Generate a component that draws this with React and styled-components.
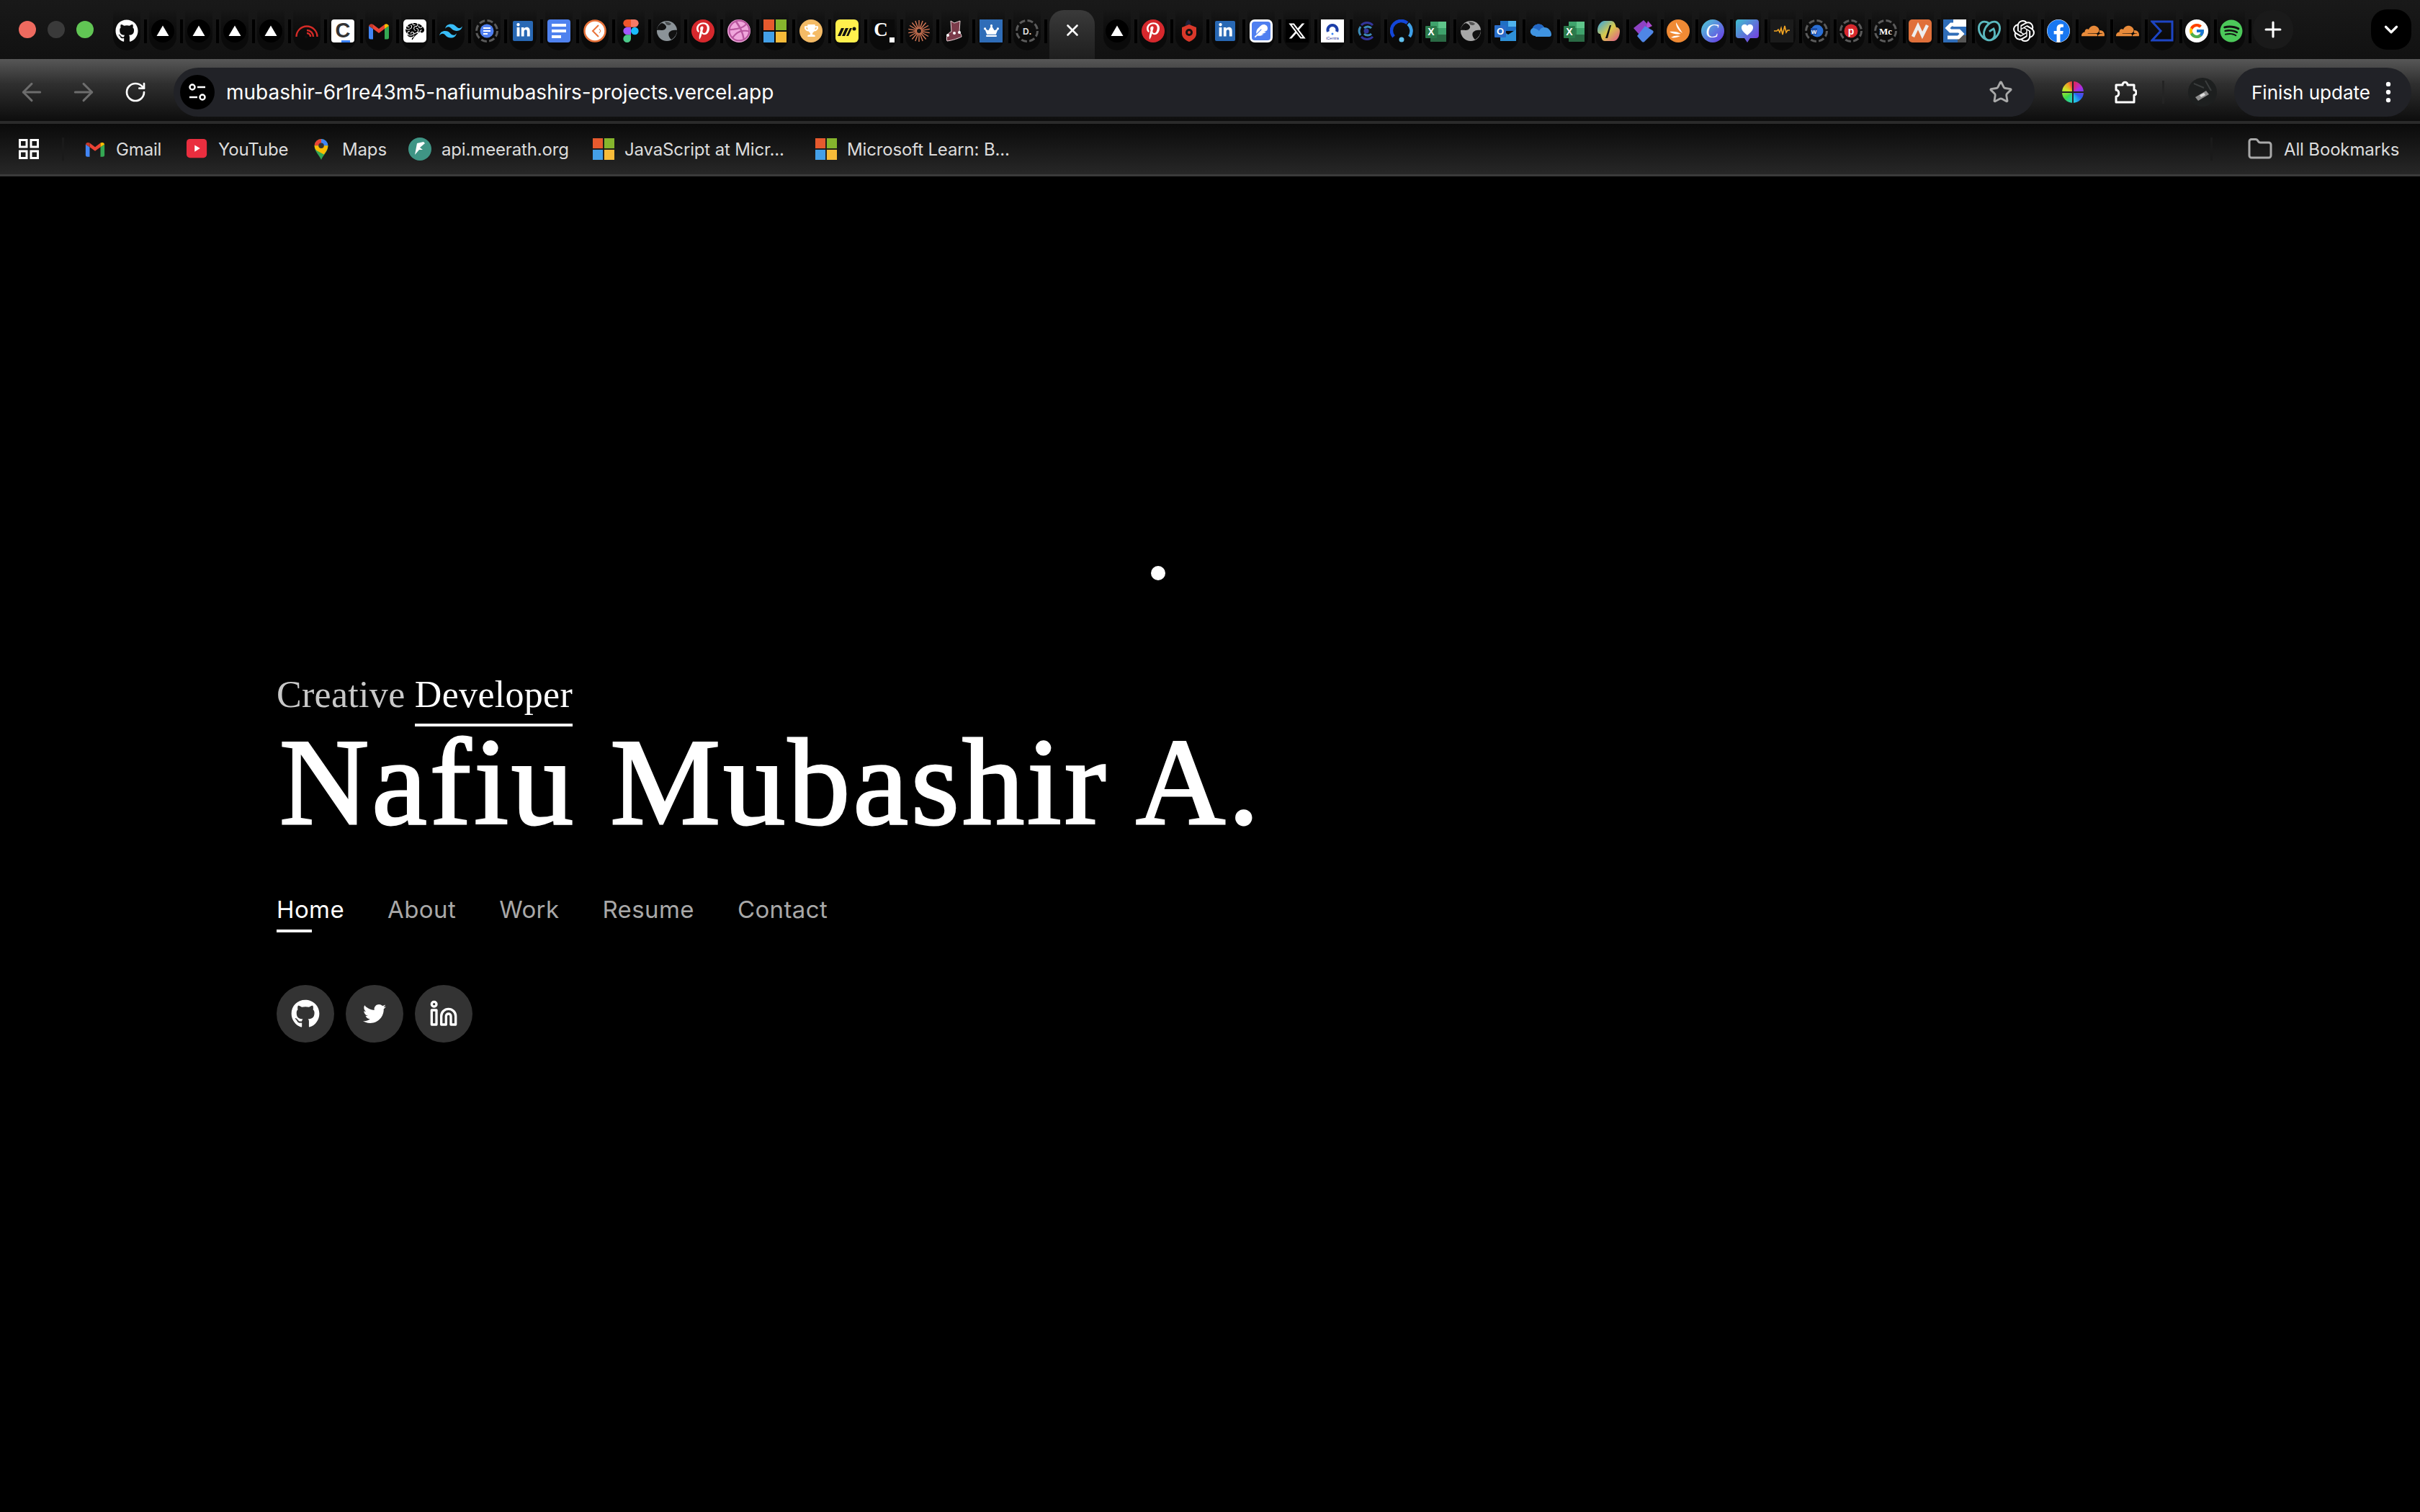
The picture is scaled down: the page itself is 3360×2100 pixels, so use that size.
import styled, { createGlobalStyle } from "styled-components";
import { ArrowLeft, ArrowRight, RotateCw, Star, Folder, EllipsisVertical, Plus, ChevronDown, X } from "lucide-react";
import {
  FaGithub, FaPinterestP, FaDribbble, FaTrophy, FaCrown, FaFeather, FaLinkedinIn,
  FaFacebook, FaSpotify, FaTwitter,
} from "react-icons/fa";
import { FaXTwitter } from "react-icons/fa6";
import { FiLinkedin } from "react-icons/fi";
import { FcGoogle } from "react-icons/fc";
import { GiBrain } from "react-icons/gi";
import { SiTailwindcss, SiOpenai, SiCloudflare, SiGodaddy } from "react-icons/si";

const Tile = styled.span`
  width: ${(p) => p.$s || "32px"};
  height: ${(p) => p.$s || "32px"};
  box-sizing: border-box;
  display: flex;
  align-items: center;
  justify-content: center;
  background: ${(p) => p.$bg};
  border-radius: ${(p) => p.$r};
  border: ${(p) => p.$border || "none"};
`;

const Svg = ({ size = 32, children }) => (
  <svg width={size} height={size} viewBox="0 0 32 32" style={{ display: "block" }}>
    {children}
  </svg>
);

const Ring = ({ children }) => (
  <Svg>
    <circle cx="16" cy="16" r="14.5" fill="none" stroke="#5b5b5b" strokeWidth="3" strokeDasharray="8 3.4" />
    {children}
  </Svg>
);

const Vercel = () => (
  <Svg>
    <circle cx="16" cy="16" r="16" fill="#000" />
    <path d="M16 8.5 24.5 23h-17z" fill="#fff" />
  </Svg>
);

const Gmail = ({ size }) => (
  <Svg size={size}>
    <path d="M2 9v16a2.500 2.500 0 0 0 2.500 2.500H8V13z" fill="#4285f4" />
    <path d="M30 9v16a2.500 2.500 0 0 1-2.500 2.500H24V13z" fill="#34a853" />
    <path d="M8 13l8 6 8-6V7l-8 6-8-6z" fill="#ea4335" />
    <path d="M2 9a4 4 0 0 1 6-2v6z" fill="#c5392b" />
    <path d="M30 9a4 4 0 0 0-6-2v6z" fill="#fbbc04" />
  </Svg>
);

const Windows = ({ size }) => (
  <Svg size={size}>
    <rect width="15" height="15" fill="#e65a2e" />
    <rect x="17" width="15" height="15" fill="#86b52d" />
    <rect y="17" width="15" height="15" fill="#44a0e8" />
    <rect x="17" y="17" width="15" height="15" fill="#f7bb39" />
  </Svg>
);

const Globe = ({ color }) => (
  <Svg>
    <circle cx="16" cy="16" r="14" fill={color} />
    <path d="M9 5c6 2 8 6 4 9-4 2-9 0-11 1 0-4 3-8 7-10z" fill="#111" />
    <path d="M30 15c-4-1-9 0-11 3-2 4 1 8 3 10 4-2 8-7 8-13z" fill="#111" />
    <path d="M13 3c3 0 7 1 9 3-2 3-5 2-7 1z" fill="#111" opacity=".55" />
  </Svg>
);

const Excel = () => (
  <Svg>
    <rect x="8" y="3" width="22" height="28" rx="1" fill="#2f7d4f" />
    <rect x="19" y="3" width="11" height="9" fill="#5fc58a" />
    <rect x="8" y="3" width="11" height="9" fill="#3fa36c" />
    <rect x="19" y="12" width="11" height="9" fill="#3fa36c" />
    <rect x="8" y="21" width="22" height="10" fill="#2a6a44" />
    <rect x="1" y="9" width="16" height="17" rx="1" fill="#2b7a4b" />
    <text x="9" y="22" fontFamily="Liberation Sans" fontWeight="700" fontSize="14" fill="#fff" textAnchor="middle">X</text>
  </Svg>
);

const Burst = () => (
  <Svg>
    {Array.from({ length: 9 }).map((_, i) => (
      <rect key={i} x="15.300" y="1" width="1.400" height="30" fill="#d97a57" transform={`rotate(${i * 20} 16 16)`} />
    ))}
    <circle cx="16" cy="16" r="3" fill="#111" />
  </Svg>
);

const tabIcons = [
  <FaGithub size={32} color="#fff" />,
  <Vercel />, <Vercel />, <Vercel />, <Vercel />,
  <Svg>
    <g fill="none" stroke="#d52b27" strokeWidth="2.400">
      <path d="M1.500 24a14.500 14.500 0 0 1 29 0" />
      <path d="M25 24a9 9 0 0 0-9-9" />
      <path d="M21 24a5 5 0 0 0-5-5" />
    </g>
    <circle cx="15" cy="24" r="2" fill="#111" />
  </Svg>,
  <Svg>
    <rect width="32" height="32" rx="4" fill="#fff" />
    <text x="16" y="25" fontFamily="Liberation Sans" fontWeight="700" fontSize="29" fill="#333" textAnchor="middle">C</text>
    <rect x="14" y="29" width="12" height="3" fill="#3b82f6" />
  </Svg>,
  <Gmail />,
  <Tile $bg="#fff" $r="5px"><GiBrain size={28} color="#000" /></Tile>,
  <SiTailwindcss size={32} color="#38bdf8" />,
  <Ring>
    <circle cx="16" cy="16" r="9.500" fill="#4f7ff0" />
    <path d="M11 12h10M11 16h10M11 20h6" stroke="#fff" strokeWidth="2" />
  </Ring>,
  <Tile $bg="#2868b4" $s="28px" $r="2px"><FaLinkedinIn size={21} color="#fff" /></Tile>,
  <Svg>
    <rect width="32" height="32" rx="4" fill="#4f82ef" />
    <path d="M6 8h20M6 16h20M6 24h13" stroke="#fff" strokeWidth="4" />
  </Svg>,
  <Svg>
    <circle cx="16" cy="16" r="14.500" fill="#fff" stroke="#e9743b" strokeWidth="2.500" />
    <path d="M21 8 13 16l8 8" fill="none" stroke="#e9743b" strokeWidth="2" />
    <path d="M22 13l2 3-2 3" fill="none" stroke="#e9743b" strokeWidth="1" />
  </Svg>,
  <Svg>
    <path d="M16 0h-5.330a5.330 5.330 0 0 0 0 10.670H16z" fill="#f0562a" />
    <path d="M16 0h5.330a5.330 5.330 0 0 1 0 10.670H16z" fill="#f77a66" />
    <path d="M16 10.670h-5.330a5.330 5.330 0 0 0 0 10.660H16z" fill="#a259ff" />
    <circle cx="21.330" cy="16" r="5.330" fill="#1abcfe" />
    <path d="M10.670 21.330H16v5.340a5.330 5.330 0 1 1-5.330-5.340z" fill="#4cc98a" />
  </Svg>,
  <Globe color="#8b9398" />,
  <Tile $bg="#d6282d" $r="50%"><FaPinterestP size={24} color="#fff" /></Tile>,
  <Tile $bg="#f0a6dc" $r="50%"><FaDribbble size={31} color="#b9579f" /></Tile>,
  <Windows />,
  <Tile $bg="#f4bb66" $r="50%"><FaTrophy size={19} color="#fff" /></Tile>,
  <Svg>
    <rect width="32" height="32" rx="6" fill="#fff04d" />
    <path d="M3 23l5-11h4L7 23zM9 23l5-11h4l-5 11zM15 23l5-11h3l-5 11z" fill="#111" />
    <circle cx="26" cy="13" r="2.500" fill="#111" />
  </Svg>,
  <Svg>
    <rect width="32" height="32" fill="#0a0a0a" />
    <text x="13" y="23" fontFamily="Liberation Serif" fontWeight="700" fontSize="27" fill="#fff" textAnchor="middle">C</text>
    <rect x="25" y="25" width="7" height="7" fill="#fff" />
  </Svg>,
  <Burst />,
  <Svg>
    <path d="M10 2l5 3 8-3-1 15c2 3 3 5 3 7-4 2-12 5-20 6-2-5 1-12 6-13z" fill="#7b3b4a" stroke="#e8d5d8" strokeWidth="1" />
    <circle cx="6" cy="22" r="2" fill="#fff" />
    <circle cx="15" cy="19" r="2" fill="#fff" />
    <circle cx="22" cy="18" r="2" fill="#fff" />
  </Svg>,
  <Tile $bg="#2f6db8" $r="0"><FaCrown size={21} color="#fff" /></Tile>,
  <Ring>
    <text x="16" y="20.500" fontFamily="Liberation Sans" fontWeight="700" fontSize="12" fill="#ddd" textAnchor="middle">D.</text>
  </Ring>,
];

const tabIconsB = [
  <Vercel />,
  <Tile $bg="#d6282d" $r="50%"><FaPinterestP size={24} color="#fff" /></Tile>,
  <Svg>
    <path d="M15 0c3 3 4 5 3 8l-7 2c-1-4 1-7 4-10z" fill="#1b2038" />
    <path d="M16 7l10 4v9c0 5-5 9-10 11C11 29 6 25 6 20v-9z" fill="#d9382a" />
    <circle cx="16" cy="18" r="5" fill="#111" />
    <circle cx="16" cy="18" r="2" fill="#d9382a" />
  </Svg>,
  <Tile $bg="#2868b4" $s="28px" $r="2px"><FaLinkedinIn size={21} color="#fff" /></Tile>,
  <Tile $bg="#4f7ff0" $r="7px" $border="3px solid #fff"><FaFeather size={18} color="#fff" /></Tile>,
  <Tile $bg="#000" $r="0"><FaXTwitter size={26} color="#fff" /></Tile>,
  <Svg>
    <rect width="32" height="32" fill="#fff" />
    <path d="M10 17a6.500 6.500 0 1 1 12 0" fill="none" stroke="#1c3fa8" strokeWidth="4" />
    <circle cx="16" cy="20" r="1.500" fill="#3b82f6" />
    <text x="16" y="28" fontFamily="Liberation Sans" fontSize="5.500" fill="#2a2f9a" textAnchor="middle">iCentra</text>
  </Svg>,
  <Svg>
    <g fill="none" strokeWidth="3">
      <path d="M24 8a11 11 0 0 0-16 0" stroke="#33359a" />
      <path d="M7 10a11 11 0 0 0 0 12" stroke="#3d8bb8" />
      <path d="M8 24a11 11 0 0 0 16 0" stroke="#33359a" />
      <path d="M22 12a7 7 0 0 0-10 0M22 20a7 7 0 0 1-10 0" stroke="#3d8bb8" />
    </g>
    <circle cx="15" cy="16" r="3.500" fill="#33359a" />
  </Svg>,
  <Svg>
    <g fill="none" strokeWidth="4.500">
      <path d="M5 24A13.500 13.500 0 0 1 24 5" stroke="#1346d8" />
      <path d="M25 6a13.500 13.500 0 0 1 2 18" stroke="#3ea0e8" />
    </g>
    <circle cx="16" cy="28" r="3.500" fill="#62c1ee" />
  </Svg>,
  <Excel />,
  <Globe color="#a8a8a8" />,
  <Svg>
    <rect x="9" y="2" width="22" height="14" fill="#1f6fc4" />
    <rect x="20" y="2" width="11" height="8" fill="#4fb3ee" />
    <path d="M9 14l11 7 11-7v16H9z" fill="#2f90d8" />
    <rect x="1" y="8" width="16" height="17" rx="1" fill="#2a6cc8" />
    <text x="9" y="21" fontFamily="Liberation Sans" fontWeight="700" fontSize="13" fill="#fff" textAnchor="middle">O</text>
  </Svg>,
  <Svg>
    <path d="M10 23C3 23 0 15 6 12c2-6 12-8 16-1 6 0 10 5 10 10 0 2-1 3-3 3H10z" fill="#3f93e0" />
    <path d="M6 12c2-6 12-8 16-1-4 0-6 3-7 5-3-3-6-4-9-4z" fill="#2367c4" />
  </Svg>,
  <Excel />,
  <Svg>
    <defs>
      <linearGradient id="cop" x1="0" y1="0" x2="1" y2="1">
        <stop offset="0" stopColor="#2fa4e7" />
        <stop offset=".5" stopColor="#d9c94a" />
        <stop offset="1" stopColor="#e0558f" />
      </linearGradient>
    </defs>
    <path d="M10 2h9c3 0 5 2 6 6l1 3c3 0 5 2 5 5 0 8-4 14-9 14H10c-3 0-4-3-5-6l-1-4c-3 0-4-2-4-5C0 8 5 2 10 2z" fill="url(#cop)" />
    <path d="M19 8l-5 18h-3l6-18z" fill="#111" />
  </Svg>,
  <Svg>
    <path d="M2 12 16 1l5 5-5 11-6 4z" fill="#8e42c4" />
    <path d="M22 2l6 7-10 5z" fill="#b04ad2" />
    <path d="M18 9l10 6c2 1 2 2 1 4L18 30c-2 2-3 2-5 0l-6-7z" fill="#4f86e6" />
  </Svg>,
  <Svg>
    <circle cx="16" cy="16" r="16" fill="#f08a34" />
    <path d="M13 4l9 15c-5-3-9-8-9-15zM4 17c5-1 12 0 16 3-6 1-12 0-16-3zM6 25c4-3 10-3 13-2-4 2-9 3-13 2z" fill="#fff" />
  </Svg>,
  <Svg>
    <defs>
      <linearGradient id="canva" x1="0" y1="0" x2="1" y2="1">
        <stop offset="0" stopColor="#4fd0d6" />
        <stop offset="1" stopColor="#6a32e6" />
      </linearGradient>
    </defs>
    <circle cx="16" cy="16" r="16" fill="url(#canva)" />
    <text x="15" y="25" fontFamily="Liberation Serif" fontStyle="italic" fontSize="27" fill="#fff" textAnchor="middle">C</text>
  </Svg>,
  <Svg>
    <defs>
      <linearGradient id="bub" x1="0" y1="0" x2="1" y2="1">
        <stop offset="0" stopColor="#3fc0d0" />
        <stop offset="1" stopColor="#7a30e0" />
      </linearGradient>
    </defs>
    <path d="M4 0h24a4 4 0 0 1 4 4v18a4 4 0 0 1-4 4h-8l-4 6-4-6H4a4 4 0 0 1-4-4V4a4 4 0 0 1 4-4z" fill="url(#bub)" />
    <path d="M16 22C8 16 7 12 8.500 9c2-3 6-3 7.500 0 1.500-3 5.500-3 7.500 0 1.500 3 .5 7-7.500 13z" fill="#fff" />
  </Svg>,
  <Svg>
    <rect width="32" height="32" fill="#1b1b1b" />
    <path d="M5 16h4l2-2 2 4 2-6 2 9 3-12 2 9 2-3h3" fill="none" stroke="#f5a623" strokeWidth="1.600" />
  </Svg>,
  <Ring>
    <circle cx="17" cy="16" r="8.500" fill="#2b6fd4" />
    <rect x="8" y="12" width="9" height="9" fill="#1e4fa8" />
    <text x="12.500" y="19.500" fontFamily="Liberation Sans" fontWeight="700" fontSize="8" fill="#fff" textAnchor="middle">W</text>
  </Ring>,
  <Ring>
    <circle cx="16" cy="16" r="9.500" fill="#d6282d" />
    <text x="16" y="21" fontFamily="Liberation Sans" fontWeight="700" fontSize="14" fill="#fff" textAnchor="middle">p</text>
  </Ring>,
  <Ring>
    <text x="16" y="21" fontFamily="Liberation Serif" fontWeight="700" fontSize="13" fill="#fff" textAnchor="middle">Mc</text>
  </Ring>,
  <Svg>
    <rect width="32" height="32" rx="5" fill="#e0703a" />
    <path d="M6 24l7-15 6 13 7-14" fill="none" stroke="#eee" strokeWidth="4.500" />
  </Svg>,
  <Svg>
    <rect width="32" height="32" fill="#2f6db8" />
    <rect x="14" width="18" height="10" fill="#fff" />
    <rect x="20" y="22" width="12" height="10" fill="#555" />
    <path d="M26 7H11L6 12l4 4h12l4 4-5 5H6" fill="none" stroke="#fff" strokeWidth="5" />
  </Svg>,
  <SiGodaddy size={32} color="#5bb9bf" />,
  <SiOpenai size={30} color="#fff" />,
  <Tile $bg="#fff" $r="50%"><FaFacebook size={32} color="#1877f2" /></Tile>,
  <SiCloudflare size={32} color="#e88a3a" />,
  <SiCloudflare size={32} color="#e88a3a" />,
  <Svg>
    <path d="M2 3h28v26H2l12-13z" fill="none" stroke="#1d45c4" strokeWidth="3" />
  </Svg>,
  <Tile $bg="#fff" $r="50%"><FcGoogle size={24} /></Tile>,
  <Tile $bg="#111" $r="50%"><FaSpotify size={32} color="#4cc95a" /></Tile>,
];

const bookmarks = [
  { label: "Gmail", icon: <Gmail size={30} />, w: 62 },
  { label: "YouTube", w: 92, icon: (
    <Svg size={30}>
      <rect y="1" width="30" height="28" rx="5" fill="#ea2e3f" />
      <path d="M12 10l8 5-8 5z" fill="#fff" />
    </Svg>
  ) },
  { label: "Maps", w: 56, icon: (
    <Svg size={30}>
      <path d="M16 32C13 25 6 20 6 11A10 10 0 0 1 26 11c0 9-7 14-10 21z" fill="#34a853" />
      <path d="M6 11A10 10 0 0 1 16 1v10z" fill="#ea4335" />
      <path d="M16 1a10 10 0 0 1 10 10H16z" fill="#4285f4" />
      <path d="M6 11h20c0 5-3 9-6 13L9 18c-2-2-3-4-3-7z" fill="#fbbc04" />
      <circle cx="16" cy="11" r="4" fill="#333" />
    </Svg>
  ) },
  { label: "api.meerath.org", w: 174, icon: (
    <Svg size={32}>
      <circle cx="16" cy="16" r="16" fill="#3f9585" />
      <path d="M21 6l-9 2-3 16 6-7h5l-4-3 7-6z" fill="#fff" />
    </Svg>
  ) },
  { label: "JavaScript at Micr...", w: 229, icon: <Windows size={30} /> },
  { label: "Microsoft Learn: B...", w: 225, icon: <Windows size={30} /> },
];

const navLinks = ["Home", "About", "Work", "Resume", "Contact"];

export default function App() {
  return (
    <Page>
      <GlobalStyle />
      <TabStrip>
        <Lights>
          <Light $c="#ee6a5f" />
          <Light $c="#3a3a3a" />
          <Light $c="#61c554" />
        </Lights>
        {tabIcons.map((icon, i) => (
          <Tab key={i} $w={50}>{icon}</Tab>
        ))}
        <ActiveTab><X size={26} color="#fff" strokeWidth={2.4} /></ActiveTab>
        {tabIconsB.map((icon, i) => (
          <Tab key={i} $w={i < 6 ? 50 : 48}>{icon}</Tab>
        ))}
        <NewTab><Plus size={34} color="#fff" strokeWidth={2.2} /></NewTab>
        <TabSearch><ChevronDown size={30} color="#fff" strokeWidth={2.6} /></TabSearch>
      </TabStrip>

      <Toolbar>
        <NavButton><ArrowLeft size={40} color="#6d6d6d" strokeWidth={1.8} /></NavButton>
        <NavButton><ArrowRight size={40} color="#6d6d6d" strokeWidth={1.8} /></NavButton>
        <NavButton><RotateCw size={32} color="#fff" strokeWidth={2} /></NavButton>
        <Omnibox>
          <SiteBadge>
            <svg width="28" height="28" viewBox="0 0 28 28" fill="none" stroke="#fff" strokeWidth="2.500">
              <circle cx="7" cy="7" r="3.500" />
              <path d="M14 7h11M3 21h11" />
              <circle cx="21" cy="21" r="3.500" />
            </svg>
          </SiteBadge>
          <Url>mubashir-6r1re43m5-nafiumubashirs-projects.vercel.app</Url>
          <Star size={34} color="#a9a9a9" strokeWidth={2} />
        </Omnibox>
        <ColorWheel />
        <PuzzleIcon width="32" height="34" viewBox="0 0 32 34" fill="none" stroke="#fff" strokeWidth="3">
          <path d="M3 7h9c0-5 7-5 7 0h9v7c4 0 4 7 0 7v10H3v-8c5 0 5-9 0-9z" strokeLinejoin="round" />
        </PuzzleIcon>
        <ToolbarDivider />
        <Avatar>
          <svg width="40" height="40" viewBox="0 0 40 40">
            <rect width="40" height="40" fill="#1d1f1f" />
            <path d="M8 8l14 6M24 4l8 14" stroke="#3a3d3d" strokeWidth="2" />
            <path d="M10 27l15-9 4 5-15 9z" fill="#8d8d8d" />
            <path d="M16 24l6-3 2 3-6 3z" fill="#ddd" />
          </svg>
        </Avatar>
        <UpdatePill>
          Finish update
          <EllipsisVertical size={38} color="#fff" strokeWidth={2} />
        </UpdatePill>
      </Toolbar>

      <BookmarkBar>
        <AppsIcon width="28" height="28" viewBox="0 0 28 28" fill="none" stroke="#fff" strokeWidth="3">
          <rect x="1.500" y="1.500" width="9.500" height="9.500" />
          <rect x="17" y="1.500" width="9.500" height="9.500" />
          <rect x="1.500" y="17" width="9.500" height="9.500" />
          <rect x="17" y="17" width="9.500" height="9.500" />
        </AppsIcon>
        <BarDivider $m="0 28px 0 32px" />
        {bookmarks.map((b) => (
          <Bookmark key={b.label}>
            {b.icon}
            <BookmarkLabel $w={b.w}>{b.label}</BookmarkLabel>
          </Bookmark>
        ))}
        <AllBookmarks>
          <BarDivider $m="0 33px 0 0" />
          <Folder size={36} color="#a9a9a9" strokeWidth={2} />
          <BookmarkLabel $w={158}>All Bookmarks</BookmarkLabel>
        </AllBookmarks>
      </BookmarkBar>

      <Hero>
        <CursorDot />
        <Subtitle>
          Creative <Accent>Developer</Accent>
        </Subtitle>
        <Title>Nafiu Mubashir A.</Title>
        <Nav>
          {navLinks.map((link, i) => (
            <NavLink key={link} $active={i === 0}>{link}</NavLink>
          ))}
        </Nav>
        <Socials>
          <Social><FaGithub size={40} /></Social>
          <Social><FaTwitter size={32} /></Social>
          <Social><FiLinkedin size={40} /></Social>
        </Socials>
      </Hero>
    </Page>
  );
}

const GlobalStyle = createGlobalStyle`
  html, body {
    margin: 0;
    padding: 0;
    background: #000;
  }
`;

const Page = styled.div`
  width: 3360px;
  height: 2100px;
  overflow: hidden;
  background: #000;
  font-family: "Inter", sans-serif;
  color: #fff;
`;

const TabStrip = styled.div`
  height: 82px;
  display: flex;
  align-items: center;
  background: linear-gradient(#191919, #111);
`;

const Lights = styled.div`
  width: 151px;
  flex-shrink: 0;
  display: flex;
  gap: 16px;
  padding-left: 26px;
  box-sizing: border-box;
`;

const Light = styled.span`
  width: 24px;
  height: 24px;
  border-radius: 50%;
  background: ${(p) => p.$c};
`;

const Tab = styled.div`
  position: relative;
  flex-shrink: 0;
  width: ${(p) => p.$w}px;
  height: 82px;
  display: flex;
  align-items: center;
  justify-content: center;
  padding-top: 3px;
  box-sizing: border-box;

  &::before {
    content: "";
    position: absolute;
    top: 12px;
    bottom: 12px;
    left: calc(50% - 19px);
    width: 38px;
    border-radius: 0 0 19px 19px;
    background: linear-gradient(transparent, #0a0a0a 70%);
  }

  &::after {
    content: "";
    position: absolute;
    top: 27px;
    height: 33px;
    left: calc(50% + 24px);
    width: 4px;
    background: #000;
  }

  > * {
    position: relative;
    z-index: 1;
  }
`;

const ActiveTab = styled.div`
  flex-shrink: 0;
  width: 63px;
  height: 68px;
  margin: 14px 6px 0;
  display: flex;
  align-items: center;
  justify-content: center;
  padding-bottom: 12px;
  box-sizing: border-box;
  border-radius: 20px 20px 0 0;
  background: linear-gradient(#3a3a3a, #1e1e1e);
`;

const NewTab = styled.div`
  width: 56px;
  height: 54px;
  margin-left: 6px;
  display: flex;
  align-items: center;
  justify-content: center;
  border-radius: 26px;
  background: #1a1a1a;
`;

const TabSearch = styled.div`
  width: 56px;
  height: 56px;
  margin-left: auto;
  margin-right: 12px;
  display: flex;
  align-items: center;
  justify-content: center;
  border-radius: 22px;
  background: #000;
`;

const Toolbar = styled.div`
  height: 86px;
  display: flex;
  align-items: center;
  padding: 6px 12px 0 8px;
  box-sizing: border-box;
  background: linear-gradient(#575757, #2f2f2f 40%, #0d0d0d);
`;

const NavButton = styled.div`
  width: 72px;
  display: flex;
  align-items: center;
  justify-content: center;
`;

const Omnibox = styled.div`
  flex: 1;
  height: 68px;
  margin-left: 17px;
  padding: 0 30px 0 9px;
  display: flex;
  align-items: center;
  border-radius: 34px;
  background: #212227;
`;

const SiteBadge = styled.div`
  width: 48px;
  height: 48px;
  border-radius: 50%;
  background: #000;
  display: flex;
  align-items: center;
  justify-content: center;
`;

const Url = styled.div`
  flex: 1;
  margin-left: 16px;
  font-size: 28px;
  color: #fff;
  white-space: nowrap;
`;

const ColorWheel = styled.div`
  width: 30px;
  height: 30px;
  margin-left: 38px;
  border-radius: 50%;
  background:
    linear-gradient(#222, #222) center / 2px 100% no-repeat,
    linear-gradient(#222, #222) center / 100% 2px no-repeat,
    conic-gradient(#e5264c, #b02be0 60deg, #2a5cf0 120deg, #22c9e8 170deg, #39d84a 230deg, #c9e82a 290deg, #f09a24 330deg, #e5264c);
`;

const PuzzleIcon = styled.svg`
  margin-left: 42px;
`;

const ToolbarDivider = styled.div`
  width: 3px;
  height: 32px;
  margin-left: 35px;
  background: #242424;
`;

const Avatar = styled.div`
  width: 40px;
  height: 40px;
  margin-left: 33px;
  margin-right: 24px;
  overflow: hidden;
  border-radius: 50%;
`;

const UpdatePill = styled.div`
  width: 246px;
  height: 68px;
  padding: 0 13px 0 24px;
  box-sizing: border-box;
  display: flex;
  align-items: center;
  justify-content: space-between;
  border-radius: 34px;
  background: #212227;
  font-size: 26px;
  white-space: nowrap;
`;

const BookmarkBar = styled.div`
  height: 77px;
  box-sizing: border-box;
  display: flex;
  align-items: center;
  border-top: 4px solid #2a2a2a;
  border-bottom: 3px solid #3a3a3a;
  background: linear-gradient(#0a0a0a, #272727);
`;

const AppsIcon = styled.svg`
  margin-left: 26px;
`;

const BarDivider = styled.div`
  width: 3px;
  height: 32px;
  margin: ${(p) => p.$m};
  background: #1a1a1a;
`;

const Bookmark = styled.div`
  display: flex;
  align-items: center;
  gap: 14px;
  margin-right: 36px;
`;

const BookmarkLabel = styled.span`
  width: ${(p) => p.$w}px;
  font-size: 24px;
  letter-spacing: -0.15px;
  color: #dcdcdc;
  white-space: nowrap;
`;

const AllBookmarks = styled.div`
  display: flex;
  align-items: center;
  gap: 15px;
  margin-left: auto;
  margin-right: 31px;
`;

const Hero = styled.main`
  position: relative;
  height: 1855px;
  padding: 690px 0 0 384px;
  box-sizing: border-box;
`;

const CursorDot = styled.div`
  position: absolute;
  left: 1598px;
  top: 541px;
  width: 20px;
  height: 20px;
  border-radius: 50%;
  background: #fff;
`;

const Subtitle = styled.h2`
  margin: 0;
  font-family: "Liberation Serif", serif;
  font-weight: 400;
  font-size: 52px;
  line-height: 60px;
  letter-spacing: 0.3px;
  color: #c8c8c8;
`;

const Accent = styled.span`
  display: inline-block;
  padding-bottom: 10px;
  border-bottom: 4px solid #fff;
  color: #fff;
`;

const Title = styled.h1`
  margin: 0;
  padding-left: 4px;
  font-family: "Liberation Serif", serif;
  font-weight: 400;
  font-size: 172px;
  line-height: 154px;
  letter-spacing: 4.1px;
  -webkit-text-stroke: 3px #fff;
  white-space: nowrap;
`;

const Nav = styled.nav`
  display: flex;
  gap: 60px;
  margin-top: 80px;
`;

const NavLink = styled.a`
  position: relative;
  font-size: 33px;
  line-height: 40px;
  letter-spacing: 0.4px;
  color: ${(p) => (p.$active ? "#fff" : "#a8a8a8")};

  &::after {
    content: "";
    display: ${(p) => (p.$active ? "block" : "none")};
    position: absolute;
    left: 0;
    top: 48px;
    width: 49px;
    height: 4px;
    background: #fff;
  }
`;

const Socials = styled.div`
  display: flex;
  gap: 16px;
  margin-top: 85px;
`;

const Social = styled.div`
  width: 80px;
  height: 80px;
  display: flex;
  align-items: center;
  justify-content: center;
  border-radius: 50%;
  background: #333;
  color: #fff;
`;
